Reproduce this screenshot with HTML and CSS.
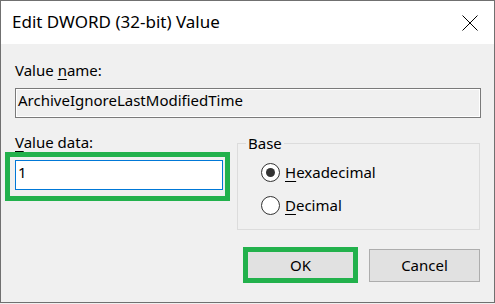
FILE: index.html
```html
<!DOCTYPE html>
<html>
<head>
<meta charset="utf-8">
<link rel="stylesheet" href="styles.css">
</head>
<body>
<div class="window">
  <div class="titlebar">
    <span class="title">Edit DWORD (32-bit) Value</span>
    <svg class="close" viewBox="0 0 16 16" width="16" height="16"><path d="M0.5 0.5 L15.5 15.5 M15.5 0.5 L0.5 15.5" stroke="#000" stroke-width="1" fill="none"/></svg>
  </div>
  <div class="content">
    <div class="label">Value <u>n</u>ame:</div>
    <div class="field readonly">ArchiveIgnoreLastModifiedTime</div>
    <div class="row">
      <div class="col-data">
        <div class="label"><u>V</u>alue data:</div>
        <div class="highlight input-hl"><div class="field edit">1</div></div>
      </div>
      <fieldset class="base">
        <legend>Base</legend>
        <div class="radio checked"><span class="circle"></span><span><u>H</u>exadecimal</span></div>
        <div class="radio"><span class="circle"></span><span><u>D</u>ecimal</span></div>
      </fieldset>
    </div>
    <div class="buttons">
      <div class="highlight ok-hl"><div class="btn ok">OK</div></div>
      <div class="btn cancel">Cancel</div>
    </div>
  </div>
</div>
</body>
</html>
```
FILE: styles.css
```css
html, body {
  margin: 0;
  background: #f0f0f0;
}
body {
  font-family: "Noto Sans", "Open Sans", sans-serif;
  font-size: 15px;
  color: #000;
  width: 495px;
  height: 304px;
  overflow: hidden;
}
.window {
  box-sizing: border-box;
  width: 495px;
  height: 303px;
  border: 1px solid #707070;
  background: #f0f0f0;
  display: flex;
  flex-direction: column;
}
.titlebar {
  height: 43px;
  flex: none;
  background: #fff;
  display: flex;
  align-items: center;
  justify-content: space-between;
  padding-left: 11px;
}
.title {
  font-size: 17px;
  line-height: 41px;
  padding-bottom: 2px;
}
.close {
  width: 16px;
  height: 16px;
  margin-right: 16px;
}
.content {
  padding: 16px 13px 0 14px;
}
.label {
  line-height: 20px;
  height: 20px;
}
u {
  text-decoration-thickness: 1px;
  text-underline-offset: 3px;
}
.field {
  box-sizing: border-box;
  height: 30px;
  line-height: 22px;
  padding: 0 2px;
}
.readonly {
  margin-top: 8px;
  border: 1px solid #7a7a7a;
  box-shadow: inset 0 0 0 1px #fff;
  background: #f0f0f0;
}
.row {
  display: flex;
  gap: 7px;
}
.col-data {
  width: 215px;
  padding-top: 14px;
}
.highlight {
  box-sizing: border-box;
  border: 5px solid #22b14c;
}
.input-hl {
  margin-left: -10px;
  width: 225px;
  height: 49px;
  padding: 3px 2px 6px 5px;
}
.edit {
  width: 208px;
  border: 1px solid #0078d7;
  background: #fff;
}
.base {
  box-sizing: border-box;
  width: 243px;
  min-width: 0;
  margin: 15px 0 0;
  padding: 9px 0 14px 0;
  border: 1px solid #dcdcdc;
}
.base legend {
  margin-left: 8px;
  padding: 0 2px;
  line-height: 20px;
}
.radio {
  display: flex;
  align-items: center;
  height: 20px;
  margin-left: 23px;
}
.radio + .radio {
  margin-top: 13px;
}
.circle {
  box-sizing: border-box;
  width: 19px;
  height: 19px;
  border: 1px solid #333;
  border-radius: 50%;
  background: #fff;
  margin-right: 5px;
  display: flex;
  align-items: center;
  justify-content: center;
}
.checked .circle::after {
  content: "";
  width: 9px;
  height: 9px;
  border-radius: 50%;
  background: #333;
}
.buttons {
  display: flex;
  justify-content: flex-end;
  align-items: flex-start;
  gap: 11px;
  margin-top: 17px;
  padding-right: 1px;
}
.btn {
  background: #e1e1e1;
  text-align: center;
}
.ok-hl {
  width: 115px;
  height: 36px;
}
.ok {
  height: 26px;
  line-height: 26px;
}
.cancel {
  box-sizing: border-box;
  width: 111px;
  height: 33px;
  margin-top: 2px;
  border: 1px solid #adadad;
  line-height: 31px;
}
```
